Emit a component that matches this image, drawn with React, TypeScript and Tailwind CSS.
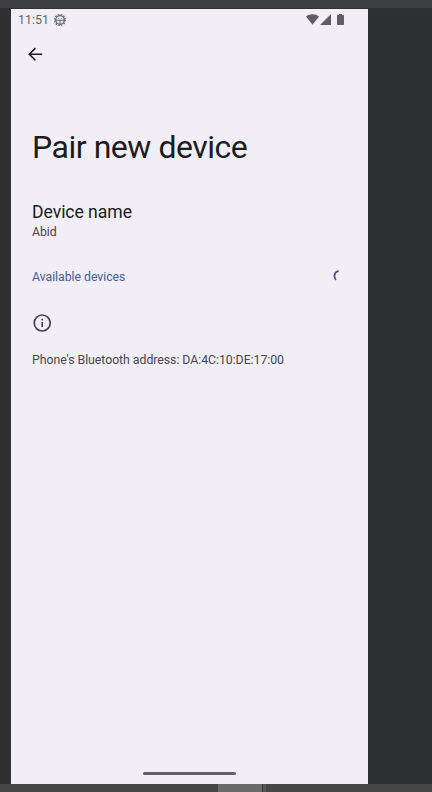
function StatusBar() {
  return (
    <div className="flex h-[22px] items-center pl-[7px] pr-[24px] text-[#66656b]">
      <span className="text-[12.4px] leading-[22px] tracking-[0px]">11:51</span>
      <svg className="-mt-px ml-[5px]" width="12" height="12" viewBox="0 0 12 12" fill="none" stroke="currentColor">
        <circle cx="6" cy="6" r="4.3" strokeWidth="1.3" />
        <circle cx="6" cy="6" r="5.4" strokeWidth="1.2" strokeDasharray="1.5 1.327" />
        <path d="M2 6.2h8M6 6v4" strokeWidth="1.1" />
        <path d="M4.1 4.3h1M6.9 4.3h1" strokeWidth="0.9" />
      </svg>
      <div className="-mt-[2px] ml-auto flex items-center text-[#5f5e64]">
        <svg width="13" height="11" viewBox="0 0 13 11" fill="currentColor">
          <path d="M0 2.6C3.6-.6 9.4-.6 13 2.6L6.5 10.7Z" />
        </svg>
        <svg className="ml-[1px]" width="11" height="11" viewBox="0 0 11 11" fill="currentColor">
          <path d="M11 0v11H0Z" />
        </svg>
        <svg className="ml-[6px]" width="7" height="11" viewBox="0 0 7 11" fill="currentColor">
          <path d="M2 0h3v1h1.3q.7 0 .7.7v8.6q0 .7-.7.7H.7Q0 11 0 10.3V1.7Q0 1 .7 1H2Z" />
        </svg>
      </div>
    </div>
  );
}

function Screen() {
  return (
    <main className="flex w-[357px] flex-col bg-[#f1eff5]">
      <StatusBar />
      <button className="ml-[17px] mt-[16px] h-[15px] w-[15px] text-[#1b1b21]" aria-label="Back">
        <svg width="15" height="15" viewBox="0 0 15 15" fill="none" stroke="currentColor" strokeWidth="1.6">
          <path d="M14.2 7.2H1.6M7.4 1.1 1.3 7.2l6.1 6.1" />
        </svg>
      </button>
      <div className="flex flex-col pl-[21px] pr-[27px]">
        <h1 className="mt-[65px] h-[40px] whitespace-nowrap text-[32px] leading-[40px] tracking-[-0.47px] text-[#1b1b21]">
          Pair new device
        </h1>
        <div className="mt-[34px] h-[22px] text-[17.6px] leading-[22px] tracking-[-0.05px] text-[#1b1b21]">Device name</div>
        <div className="h-[18px] text-[12.3px] leading-[18px] tracking-[-0.04px] text-[#46464f]">Abid</div>
        <div className="mt-[27px] flex h-[18px] items-center justify-between">
          <h2 className="text-[12.3px] leading-[18px] tracking-[-0.04px] text-[#4c5b8f]">Available devices</h2>
          <svg className="-mt-[2px]" width="8" height="12" viewBox="0 0 8 12" fill="none" stroke="#46558a" strokeWidth="1.8">
            <path d="M5.6 .9C.8 2.3 .4 6.8 3 10" />
          </svg>
        </div>
        <svg className="ml-[1px] mt-[28px]" width="18" height="18" viewBox="0 0 18 18" fill="none" stroke="#46464f">
          <circle cx="9.2" cy="9" r="8" strokeWidth="1.7" />
          <path d="M9.2 8v5M9.2 4.7v1.7" strokeWidth="1.7" />
        </svg>
        <p className="mt-[19px] whitespace-nowrap text-[12.3px] leading-[18px] tracking-[-0.04px] text-[#46464f]">
          Phone's Bluetooth address: DA:4C:10:DE:17:00
        </p>
      </div>
      <div className="mb-[9px] ml-[132px] mt-auto h-[3px] w-[93px] rounded-full bg-[#626166]" />
    </main>
  );
}

export default function App() {
  return (
    <div className="flex h-[792px] w-[432px] flex-col overflow-hidden bg-[#2d2f30] font-['Roboto',sans-serif]">
      <div className="h-[8px] bg-[#3c4042]" />
      <div className="h-px bg-[#303133]" />
      <div className="flex h-[775px] pl-[11px]">
        <Screen />
      </div>
      <div className="flex h-[8px] bg-[#464647]">
        <div className="ml-[218px] h-full w-[44px] bg-[#6a6a6b]" />
        <div className="h-full w-px bg-[#39393a]" />
        <div className="h-full w-[3px] bg-[#565657]" />
      </div>
    </div>
  );
}
